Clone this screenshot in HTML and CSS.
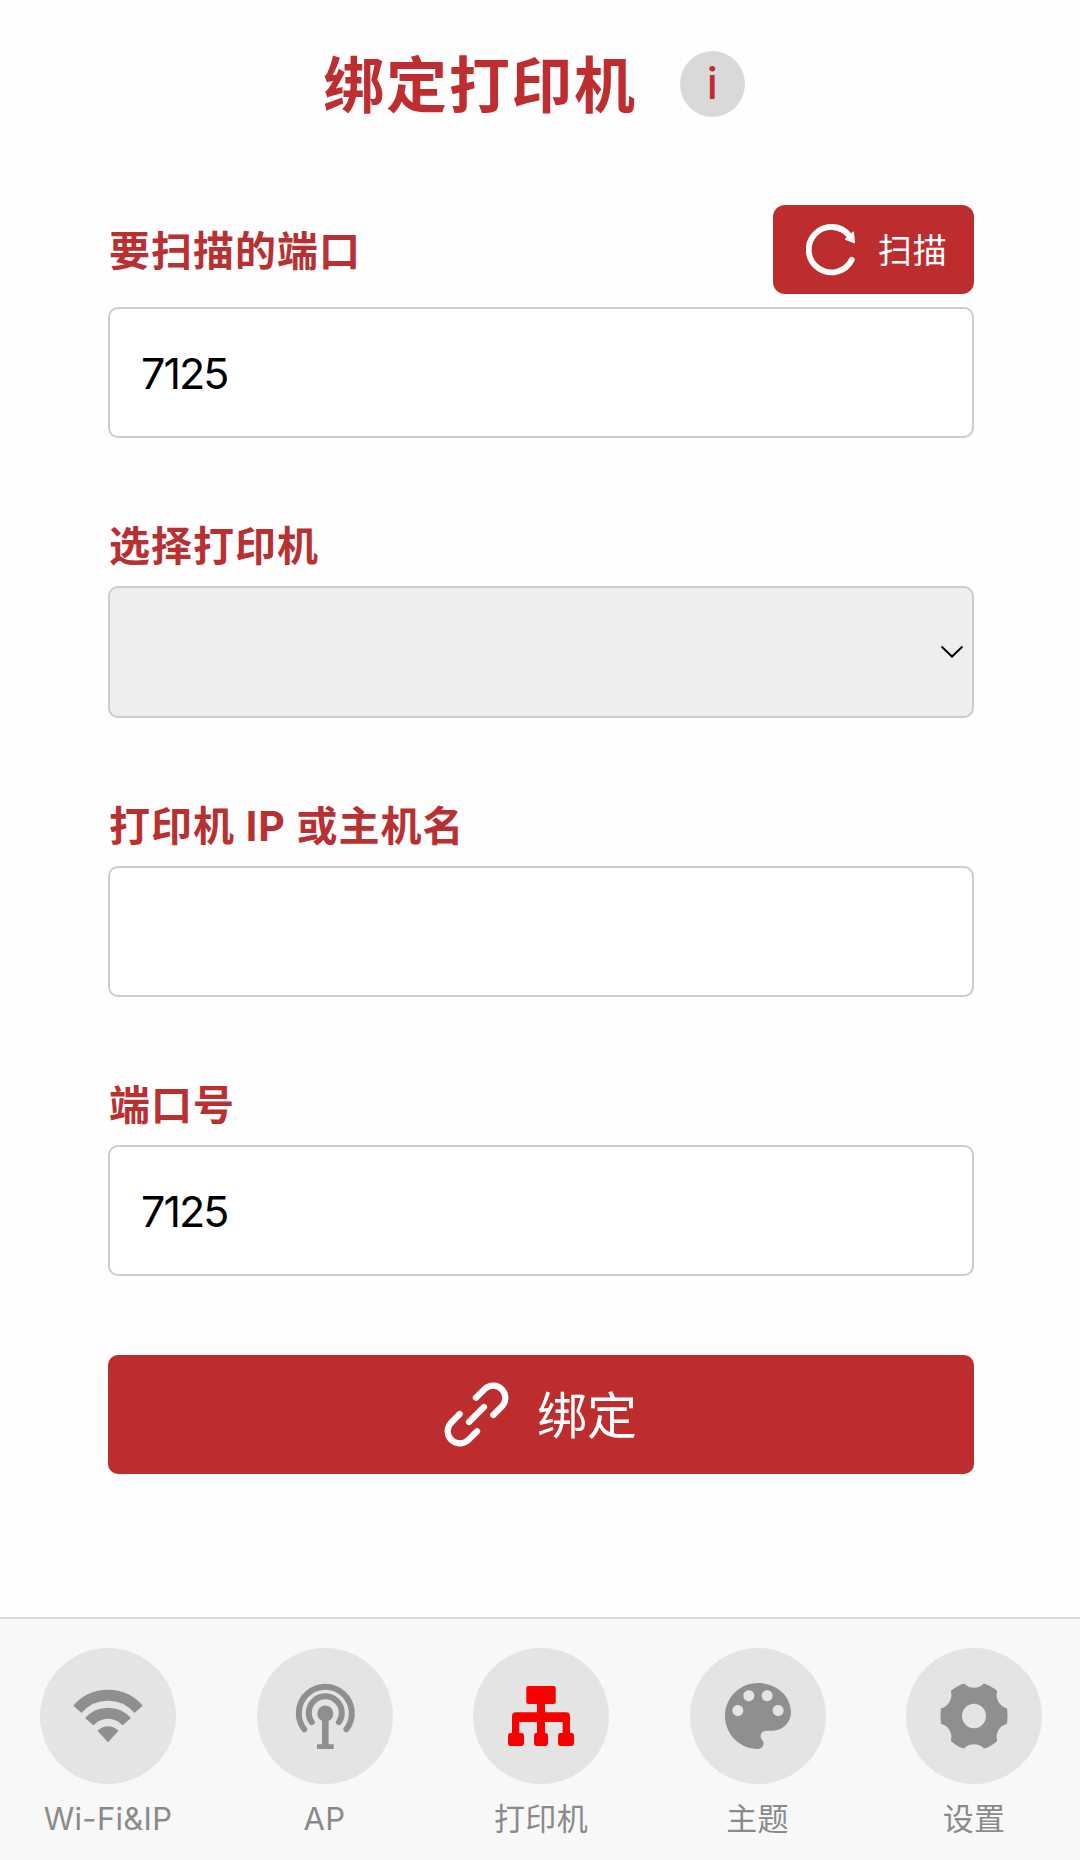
FILE: index.html
```html
<!DOCTYPE html>
<html lang="zh-CN">
  <head>
    <meta charset="UTF-8" />
    <meta name="viewport" content="width=device-width, initial-scale=1.0" />
    <title>绑定打印机</title>
    <link rel="stylesheet" href="styles.css">
  </head>
  <body>
    <main class="content">
      <header class="page-header">
        <h1>绑定打印机</h1>
        <button class="info-btn" type="button">i</button>
      </header>

      <form class="bind-form">
        <div class="form-group">
          <div class="label-row">
            <label for="scan-port">要扫描的端口</label>
            <button class="scan-btn" type="button">
              <svg class="scan-icon" viewBox="0 0 52 52">
                <path d="M45.7 35.9A22.7 22.7 0 1 1 43.4 11.8" fill="none" stroke="currentColor" stroke-width="5.8" stroke-linecap="round" />
                <path d="M47.3 8.3L48.3 18.5L39.5 15.2Z" fill="currentColor" stroke="currentColor" stroke-width="1.4" stroke-linejoin="round" />
              </svg>
              <span>扫描</span>
            </button>
          </div>
          <input id="scan-port" type="text" value="7125" />
        </div>

        <div class="form-group">
          <label for="printer">选择打印机</label>
          <div class="select-wrap">
            <select id="printer" disabled></select>
            <svg class="chevron" viewBox="0 0 24 14">
              <path d="M1.5 1.5L12 11.5L22.5 1.5" fill="none" stroke="#000" stroke-width="2" />
            </svg>
          </div>
        </div>

        <div class="form-group">
          <label for="host">打印机 IP 或主机名</label>
          <input id="host" type="text" />
        </div>

        <div class="form-group">
          <label for="port">端口号</label>
          <input id="port" type="text" value="7125" />
        </div>

        <button class="bind-btn" type="button">
          <svg class="link-icon" viewBox="0 0 65 65" fill="none" stroke="currentColor" stroke-width="6.2" stroke-linecap="round">
            <path d="M31.9 15.7L41.2 6.6A12.2 12.2 0 0 1 58.4 23.8L49.3 33" />
            <path d="M40 25L25 40" />
            <path d="M33.1 49.3L23.8 58.4A12.2 12.2 0 0 1 6.6 41.2L15.7 32" />
          </svg>
          <span>绑定</span>
        </button>
      </form>
    </main>

    <nav class="tab-bar">
      <a class="tab" href="#">
        <span class="tab-icon">
          <svg viewBox="24 24 88 88">
            <path d="M37.4 61.3A40.4 40.4 0 0 1 98.6 61.3" fill="none" stroke="currentColor" stroke-width="11" />
            <path d="M49.2 73.7A25 25 0 0 1 86.8 73.7" fill="none" stroke="currentColor" stroke-width="11" />
            <path d="M58.4 82.8Q68 75 77.6 82.8L68 93.2Z" fill="currentColor" stroke="currentColor" stroke-width="1.4" stroke-linejoin="round" />
          </svg>
        </span>
        <span class="tab-text">Wi-Fi&amp;IP</span>
      </a>
      <a class="tab" href="#">
        <span class="tab-icon">
          <svg viewBox="24 24 88 88">
            <g fill="none" stroke="currentColor" stroke-width="6" stroke-linecap="round">
              <path d="M47.2 81.3A26.5 26.5 0 1 1 89.4 81.3" />
              <path d="M54.7 74.1A16.5 16.5 0 1 1 81.9 74.1" />
            </g>
            <circle cx="68.3" cy="65.5" r="8" fill="currentColor" />
            <path d="M65 70H71.6V96.3H76.7V101H60V96.3H65Z" fill="currentColor" />
          </svg>
        </span>
        <span class="tab-text">AP</span>
      </a>
      <a class="tab active" href="#">
        <span class="tab-icon">
          <svg viewBox="24 24 88 88" fill="currentColor">
            <rect x="53.3" y="38" width="29.4" height="18" rx="2" />
            <rect x="64" y="54" width="8" height="33" />
            <path d="M39 87V68.3Q39 64.3 43 64.3H93Q97 64.3 97 68.3V87H89.7V74H46.3V87Z" />
            <rect x="35" y="85" width="16" height="13" rx="2.4" />
            <rect x="61" y="85" width="14" height="13" rx="2.4" />
            <rect x="85" y="85" width="16" height="13" rx="2.4" />
          </svg>
        </span>
        <span class="tab-text">打印机</span>
      </a>
      <a class="tab" href="#">
        <span class="tab-icon">
          <svg viewBox="0 0 24 24" fill="currentColor">
            <path d="M12 3c-4.97 0-9 4.03-9 9s4.03 9 9 9c.83 0 1.5-.67 1.5-1.5 0-.39-.15-.74-.39-1.01-.23-.26-.38-.61-.38-.99 0-.83.67-1.5 1.5-1.5H16c2.76 0 5-2.24 5-5 0-4.42-4.03-8-9-8zm-5.5 9c-.83 0-1.5-.67-1.5-1.5S5.67 9 6.5 9 8 9.67 8 10.5 7.33 12 6.5 12zm3-4C8.67 8 8 7.33 8 6.5S8.67 5 9.5 5s1.5.67 1.5 1.5S10.33 8 9.5 8zm5 0c-.83 0-1.5-.67-1.5-1.5S13.67 5 14.5 5s1.5.67 1.5 1.5S15.33 8 14.5 8zm3 4c-.83 0-1.5-.67-1.5-1.5S16.67 9 17.5 9s1.5.67 1.5 1.5-.67 1.5-1.5 1.5z" />
          </svg>
        </span>
        <span class="tab-text">主题</span>
      </a>
      <a class="tab" href="#">
        <span class="tab-icon">
          <svg viewBox="-44 -44 88 88" fill="currentColor" fill-rule="evenodd">
            <path d="M-9.9 -32.5A13.5 13.5 0 0 0 9.9 -32.5Q17 -30.5 23.2 -24.9A13.5 13.5 0 0 0 33.1 -7.7Q34 0 33.1 7.7A13.5 13.5 0 0 0 23.2 24.9Q17 30.5 9.9 32.5A13.5 13.5 0 0 0 -9.9 32.5Q-17 30.5 -23.2 24.9A13.5 13.5 0 0 0 -33.1 7.7Q-34 0 -33.1 -7.7A13.5 13.5 0 0 0 -23.2 -24.9Q-17 -30.5 -9.9 -32.5ZM0 -12.2A12 12.2 0 1 0 0 12.2A12 12.2 0 1 0 0 -12.2Z" />
          </svg>
        </span>
        <span class="tab-text">设置</span>
      </a>
    </nav>
  </body>
</html>
```

FILE: styles.css
```css
* {
  box-sizing: border-box;
}

body {
  margin: 0;
  height: 1860px;
  display: flex;
  flex-direction: column;
  justify-content: space-between;
  background-color: #fefefe;
  font-family: "Inter", "Noto Sans CJK SC", sans-serif;
}

button,
input,
select {
  font-family: inherit;
}

.content {
  width: 866px;
  margin-left: 108px;
  padding-top: 51px;
}

.page-header {
  display: flex;
  justify-content: center;
  align-items: center;
  gap: 43px;
  height: 66px;
  margin-bottom: 88px;
  padding-right: 14px;
}

.page-header h1 {
  margin: 0;
  padding-top: 3px;
  font-size: 61px;
  line-height: 66px;
  letter-spacing: 1.7px;
  color: #be2d2f;
}

.info-btn {
  width: 65px;
  height: 66px;
  padding: 0 0 3px;
  border: none;
  border-radius: 50%;
  background-color: #d9d9d9;
  color: #be2d2f;
  font-size: 44px;
  font-weight: 500;
  line-height: 60px;
}

.form-group {
  margin-bottom: 79px;
}

.form-group label {
  display: block;
  height: 56px;
  margin-bottom: 13px;
  padding: 1px 0 0 1px;
  font-size: 41px;
  font-weight: 700;
  line-height: 56px;
  letter-spacing: 1px;
  color: #b93033;
}

.label-row {
  display: flex;
  justify-content: space-between;
  align-items: center;
  height: 89px;
  margin-bottom: 13px;
}

.form-group .label-row label {
  margin-bottom: 0;
}

.scan-btn {
  display: flex;
  align-items: center;
  gap: 20px;
  width: 201px;
  height: 89px;
  padding: 0 0 0 33px;
  border: none;
  border-radius: 12px;
  background-color: #be2d2e;
  color: #fff;
  font-size: 34px;
  letter-spacing: 0.8px;
}

.scan-btn span {
  margin-top: -2px;
}

.scan-icon {
  width: 52px;
  height: 52px;
}

.form-group input,
.form-group select {
  display: block;
  width: 100%;
  height: 131.3px;
  padding: 0 31px;
  border: 2px solid #ccc;
  border-radius: 10px;
  background-color: #fff;
  color: #000;
  font-size: 43px;
  letter-spacing: -1.9px;
}

.select-wrap {
  position: relative;
}

.form-group select {
  appearance: none;
  background-color: #eee;
  opacity: 1;
}

.chevron {
  position: absolute;
  top: 59px;
  right: 10px;
  width: 24px;
  height: 14px;
}

.bind-btn {
  display: flex;
  justify-content: center;
  align-items: center;
  gap: 28px;
  width: 100%;
  height: 119px;
  padding: 0 1px 0 0;
  border: none;
  border-radius: 10px;
  background-color: #be2d2e;
  color: #fff;
  font-size: 50px;
}

.bind-btn span {
  margin-top: -6px;
}

.link-icon {
  width: 65px;
  height: 65px;
}

.tab-bar {
  display: flex;
  justify-content: space-between;
  height: 243px;
  padding: 29px 38px 0 40px;
  border-top: 2px solid #dadada;
  background-color: #f8f8f8;
}

.tab {
  display: flex;
  flex-direction: column;
  align-items: center;
  width: 136px;
  color: #8f8f8f;
  text-decoration: none;
}

.tab-icon {
  display: flex;
  justify-content: center;
  align-items: center;
  width: 136px;
  height: 136px;
  border-radius: 50%;
  background-color: #e4e4e4;
}

.tab-icon svg {
  width: 88px;
  height: 88px;
}

.tab.active .tab-icon {
  color: #f80000;
}

.tab-text {
  margin-top: 15px;
  font-size: 31px;
  line-height: 40px;
  letter-spacing: 0.3px;
  color: #8a8a8a;
}
```
